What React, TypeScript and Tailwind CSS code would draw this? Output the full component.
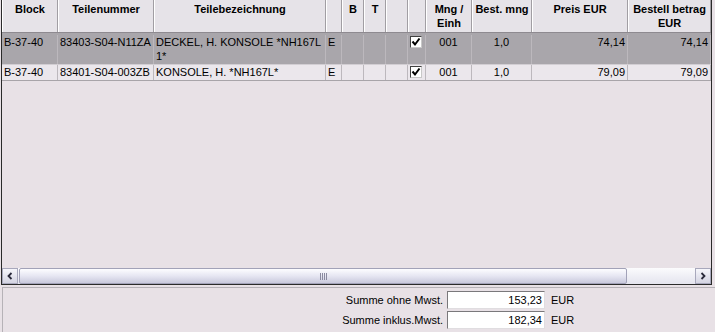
import React from "react";

type Col = { w: number; label: React.ReactNode };

const cols: Col[] = [
  { w: 56, label: "Block" },
  { w: 96, label: "Teilenummer" },
  { w: 172, label: "Teilebezeichnung" },
  { w: 16, label: "" },
  { w: 22, label: "B" },
  { w: 22, label: "T" },
  { w: 22, label: "" },
  { w: 18, label: "" },
  { w: 46, label: (<>Mng /<br />Einh</>) },
  { w: 60, label: "Best. mng" },
  { w: 96, label: "Preis EUR" },
  { w: 83, label: (<>Bestell betrag<br />EUR</>) },
];

type Row = {
  block: string;
  nr: string;
  bez: React.ReactNode;
  e: string;
  mng: string;
  best: string;
  preis: string;
  betrag: string;
};

const rows: Row[] = [
  {
    block: "B-37-40",
    nr: "83403-S04-N11ZA",
    bez: (<>DECKEL, H. KONSOLE *NH167L<br />1*</>),
    e: "E",
    mng: "001",
    best: "1,0",
    preis: "74,14",
    betrag: "74,14",
  },
  {
    block: "B-37-40",
    nr: "83401-S04-003ZB",
    bez: "KONSOLE, H. *NH167L*",
    e: "E",
    mng: "001",
    best: "1,0",
    preis: "79,09",
    betrag: "79,09",
  },
];

function Check() {
  return (
    <span className="inline-flex w-[12px] h-[12px] bg-white border border-t-[#404040] border-l-[#404040] border-r-[#c8c8c8] border-b-[#c8c8c8] items-center justify-center">
      <svg width="10" height="10" viewBox="0 0 10 10">
        <path d="M1.5 4.5 L4 7.5 L8.5 1.5" fill="none" stroke="#000" strokeWidth="2" />
      </svg>
    </span>
  );
}

function Cell({
  w,
  children,
  align = "left",
}: {
  w: number;
  children?: React.ReactNode;
  align?: "left" | "center" | "right";
}) {
  const a =
    align === "left" ? "text-left pl-[2px]" : align === "right" ? "text-right pr-[2px]" : "text-center";
  return (
    <div
      className={`shrink-0 h-full border-r border-[#bcb8bd] overflow-hidden ${a}`}
      style={{ width: w }}
    >
      {children}
    </div>
  );
}

export default function App() {
  return (
    <div
      className="w-[715px] h-[332px] bg-[#e8e1e6] text-black text-[11px] overflow-hidden"
      style={{ fontFamily: '"Liberation Sans", Arial, sans-serif' }}
    >
      {/* table frame */}
      <div className="ml-[1px] w-[711px] h-[285px] border-l border-r border-b border-[#2a2a2a] flex flex-col">
        {/* header */}
        <div className="flex h-[33px] border-b border-[#8e8a90] bg-[#e6e3e8] shrink-0">
          {cols.map((c, i) => (
            <div
              key={i}
              className="shrink-0 h-full border-l border-l-white border-r border-r-[#a19ea3] font-bold text-center leading-[14px] pt-[2px]"
              style={{ width: c.w }}
            >
              {c.label}
            </div>
          ))}
        </div>
        {/* rows */}
        {rows.map((r, i) => (
          <div
            key={i}
            className={`flex shrink-0 border-b leading-[14px] ${
              i === 0
                ? "h-[32px] bg-[#a9a6ab] border-[#d2ced3] pt-[2px]"
                : "h-[16px] bg-[#ebe7ec] border-[#a8a4a9]"
            }`}
          >
            <Cell w={56}>{r.block}</Cell>
            <Cell w={96}>{r.nr}</Cell>
            <Cell w={172}>{r.bez}</Cell>
            <Cell w={16}>{r.e}</Cell>
            <Cell w={22} />
            <Cell w={22} />
            <Cell w={22} />
            <div className="shrink-0 w-[18px] h-full border-r border-[#bcb8bd] pl-[2px] pt-[1px]">
              <Check />
            </div>
            <Cell w={46} align="center">{r.mng}</Cell>
            <Cell w={60} align="center">{r.best}</Cell>
            <Cell w={96} align="right">{r.preis}</Cell>
            <Cell w={83} align="right">{r.betrag}</Cell>
          </div>
        ))}
        <div className="flex-1" />
        {/* horizontal scrollbar */}
        <div className="h-[16px] flex shrink-0 bg-gradient-to-b from-[#fbfbfd] to-[#e4e4ee]">
          <div className="w-[16px] h-full border border-[#a8a8bc] bg-gradient-to-b from-[#f6f6fb] to-[#d4d4e2] flex items-center justify-center">
            <svg width="8" height="8" viewBox="0 0 8 8">
              <path d="M5.5 1 L2.5 4 L5.5 7" fill="none" stroke="#2a2a3a" strokeWidth="1.8" />
            </svg>
          </div>
          <div className="flex-1 h-full pl-[1px]">
            <div className="w-[608px] h-full border border-[#a2a2b8] rounded-[2px] bg-gradient-to-b from-[#fdfdff] via-[#e6e6f2] to-[#c9c9dc] flex items-center justify-center">
              <span className="flex gap-[1px]">
                <span className="w-[1px] h-[7px] bg-[#8a8aa0]" />
                <span className="w-[1px] h-[7px] bg-[#8a8aa0]" />
                <span className="w-[1px] h-[7px] bg-[#8a8aa0]" />
                <span className="w-[1px] h-[7px] bg-[#8a8aa0]" />
              </span>
            </div>
          </div>
          <div className="w-[16px] h-full border border-[#a8a8bc] bg-gradient-to-b from-[#f6f6fb] to-[#d4d4e2] flex items-center justify-center">
            <svg width="8" height="8" viewBox="0 0 8 8">
              <path d="M2.5 1 L5.5 4 L2.5 7" fill="none" stroke="#2a2a3a" strokeWidth="1.8" />
            </svg>
          </div>
        </div>
      </div>
      {/* bottom panel */}
      <div className="mt-[2px] ml-[2px] h-[45px] border-t border-l border-[#b6b2b7] pt-[3px] flex flex-col gap-[2px]">
        {[
          ["Summe ohne Mwst.", "153,23"],
          ["Summe inklus.Mwst.", "182,34"],
        ].map(([l, v]) => (
          <div key={l} className="flex items-center h-[18px]">
            <div className="w-[444px] text-right pr-[4px]">{l}</div>
            <div className="w-[98px] h-[18px] bg-white border border-t-[#7a787b] border-l-[#7a787b] border-r-[#e0dde0] border-b-[#e0dde0] text-right pr-[2px] leading-[16px]">
              {v}
            </div>
            <div className="ml-[6px]">EUR</div>
          </div>
        ))}
      </div>
    </div>
  );
}
